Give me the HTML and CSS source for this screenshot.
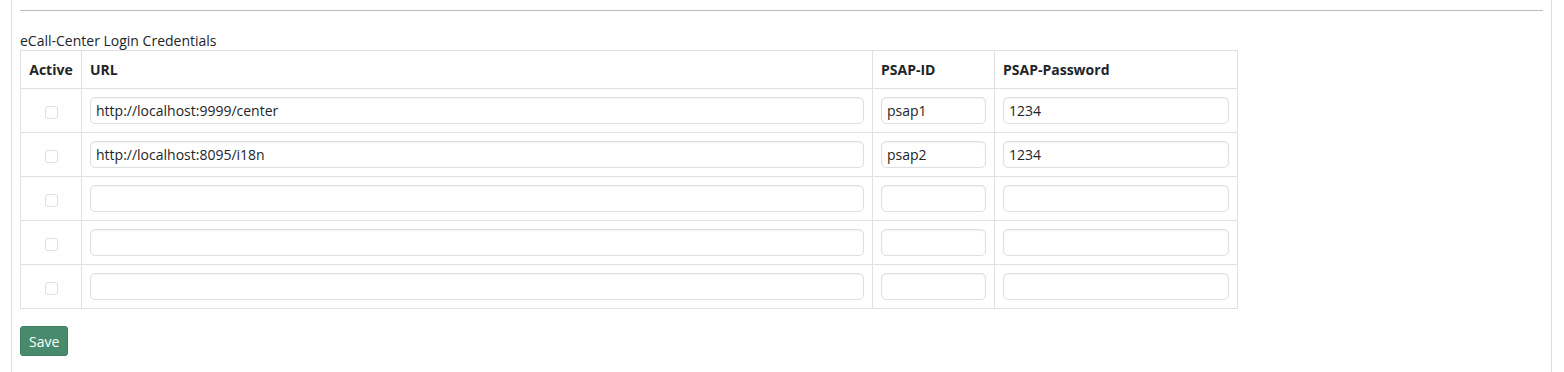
FILE: index.html
```html
<!DOCTYPE html>
<html>

<head>
    <meta charset="utf-8">
    <title>eCall-Center Login Credentials</title>
    <link rel="stylesheet" href="styles.css">
</head>

<body>
    <div class="panel">
        <hr class="sep">
        <form class="creds">
            <div class="caption">eCall-Center Login Credentials</div>
            <table class="grid">
                <thead>
                    <tr>
                        <th class="c-active">Active</th>
                        <th class="c-url">URL</th>
                        <th class="c-id">PSAP-ID</th>
                        <th class="c-pw">PSAP-Password</th>
                    </tr>
                </thead>
                <tbody>
                    <tr>
                        <td class="c-active"><input type="checkbox"></td>
                        <td><input type="text" value="http://localhost:9999/center"></td>
                        <td><input type="text" value="psap1"></td>
                        <td><input type="text" value="1234"></td>
                    </tr>
                    <tr>
                        <td class="c-active"><input type="checkbox"></td>
                        <td><input type="text" value="http://localhost:8095/i18n"></td>
                        <td><input type="text" value="psap2"></td>
                        <td><input type="text" value="1234"></td>
                    </tr>
                    <tr>
                        <td class="c-active"><input type="checkbox"></td>
                        <td><input type="text"></td>
                        <td><input type="text"></td>
                        <td><input type="text"></td>
                    </tr>
                    <tr>
                        <td class="c-active"><input type="checkbox"></td>
                        <td><input type="text"></td>
                        <td><input type="text"></td>
                        <td><input type="text"></td>
                    </tr>
                    <tr>
                        <td class="c-active"><input type="checkbox"></td>
                        <td><input type="text"></td>
                        <td><input type="text"></td>
                        <td><input type="text"></td>
                    </tr>
                </tbody>
            </table>
            <button type="button" class="btn-save">Save</button>
        </form>
    </div>
</body>

</html>
```

FILE: styles.css
```css
body {
    margin: 0;
    font-family: "Open Sans", "DejaVu Sans", sans-serif;
    font-size: 14px;
    color: #212529;
    background: #fff;
}

.panel {
    margin-left: 11px;
    width: 1523px;
    height: 372px;
    padding: 0 8px;
    border-left: 1px solid #ddd;
    border-right: 1px solid #ddd;
}

.sep {
    margin: 0;
    padding-top: 10px;
    border: 0;
    border-bottom: 1px solid #bbb;
}

.creds {
    padding-top: 21px;
}

.caption {
    height: 18px;
    line-height: 18px;
}

.grid {
    width: 1218px;
    border-collapse: collapse;
    border: 1px solid #dee2e6;
}

.grid th,
.grid td {
    border: 1px solid #dee2e6;
    padding: 8px;
    text-align: left;
}

.grid th {
    height: 21px;
    line-height: 21px;
    font-weight: bold;
}

.grid td {
    height: 27px;
}

.grid .c-active {
    width: 44px;
    text-align: center;
}

.grid .c-url {
    width: 774px;
}

.grid .c-id {
    width: 105px;
}

.grid input[type="text"] {
    box-sizing: border-box;
    display: block;
    width: 100%;
    height: 27px;
    padding: 0 5px;
    border: 1px solid #dcdfe3;
    border-radius: 5px;
    box-shadow: inset 0 1px 2px rgba(0, 0, 0, .06);
    font-family: inherit;
    font-size: 14px;
    color: #212529;
}

.grid input[type="checkbox"] {
    appearance: none;
    width: 13px;
    height: 13px;
    margin: 0;
    vertical-align: middle;
    border: 1px solid #dcdfe3;
    border-radius: 3px;
    background: #fff;
}

.btn-save {
    margin-top: 17px;
    height: 30px;
    padding: 0 8px;
    border: 1px solid #3f7d62;
    border-radius: 3px;
    background: #478a6c;
    color: #fff;
    font-family: inherit;
    font-size: 14px;
}
```
